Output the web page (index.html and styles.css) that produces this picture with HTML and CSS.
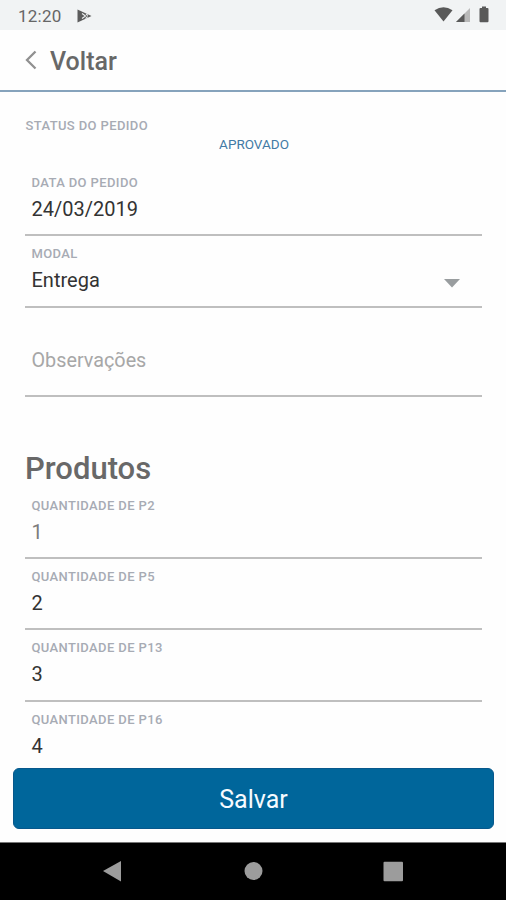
FILE: index.html
```html
<!DOCTYPE html>
<html lang="pt-BR">
<head>
<meta charset="utf-8">
<title>Pedido</title>
<link rel="stylesheet" href="styles.css">
</head>
<body>
<div class="screen">
  <div class="statusbar">
    <span class="clock">12:20</span>
    <svg class="play" width="16" height="14" viewBox="0 0 16 14"><path d="M0.5 0.5L14.5 7L0.5 13.5Z" fill="#5c5c5c"/><path d="M5 4.5L8.5 7L5 9.5M9 4.8L10.8 6.5M8.6 9.6L10.6 7.6" fill="none" stroke="#f1f3f4" stroke-width="1.1"/></svg>
    <svg class="system" width="56" height="18" viewBox="0 0 56 18"><path d="M0.5 4.2Q9.5 -1.8 18.5 4.2L9.5 15.5Z" fill="#595959"/><path d="M22 16L36 2V16Z" fill="#b9b9b9"/><path d="M22 16L30.5 7.5V16Z" fill="#595959"/><path d="M48 0.5H52V2H53.5Q54.5 2 54.5 3V15.2Q54.5 16.2 53.5 16.2H46.5Q45.5 16.2 45.5 15.2V3Q45.5 2 46.5 2H48Z" fill="#595959"/></svg>
  </div>
  <header class="header">
    <svg width="12" height="20" viewBox="0 0 12 20"><path d="M10.5 1.5L2 10L10.5 18.5" fill="none" stroke="#909090" stroke-width="2.3"/></svg>
    <span class="back">Voltar</span>
  </header>
  <main class="content">
    <div class="label status-label">STATUS DO PEDIDO</div>
    <div class="status">APROVADO</div>
    <div class="field date"><div class="label">DATA DO PEDIDO</div><div class="value">24/03/2019</div></div>
    <div class="field select"><div class="label">MODAL</div><div class="value">Entrega<svg width="16" height="9" viewBox="0 0 16 9"><path d="M0 0H16L8 8.5Z" fill="#999d9f"/></svg></div></div>
    <div class="field notes"><div class="value placeholder">Observações</div></div>
    <h1 class="title">Produtos</h1>
    <div class="field"><div class="label">QUANTIDADE DE P2</div><div class="value muted">1</div></div>
    <div class="field"><div class="label">QUANTIDADE DE P5</div><div class="value">2</div></div>
    <div class="field tall"><div class="label">QUANTIDADE DE P13</div><div class="value">3</div></div>
    <div class="field"><div class="label">QUANTIDADE DE P16</div><div class="value">4</div></div>
  </main>
  <footer class="footer"><button class="save">Salvar</button></footer>
  <nav class="navbar">
    <svg width="506" height="57" viewBox="0 0 506 57"><path d="M103 28L121 18V38.5Z" fill="#9c9c9c"/><circle cx="253.5" cy="28" r="9" fill="#9c9c9c"/><rect x="383.5" y="18.7" width="19.5" height="19.5" rx="1" fill="#9c9c9c"/></svg>
  </nav>
</div>
</body>
</html>
```
FILE: styles.css
```css
* { box-sizing: border-box; }
body { margin: 0; background: #fefefe; font-family: Roboto, "Liberation Sans", sans-serif; }
.screen { width: 506px; height: 900px; display: flex; flex-direction: column; overflow: hidden; }
.statusbar { height: 30px; flex: none; display: flex; align-items: center; padding: 0 16px 0 18px; background: #f1f3f4; }
.clock { font-size: 17px; line-height: 20px; letter-spacing: 0.25px; color: #666; padding-top: 1px; }
.play { margin: 1px 0 0 15px; }
.system { margin-left: auto; }
.header { height: 62px; flex: none; display: flex; align-items: center; padding: 0 0 0 25px; gap: 13px; border-bottom: 2px solid #86a3bc; }
.back { font-size: 25px; line-height: 30px; font-weight: 500; color: #686868; padding-top: 3px; }
.content { flex: 1; min-height: 0; overflow: hidden; padding: 26px 24px 0 25px; }
.label { font-size: 13px; line-height: 16px; font-weight: 500; letter-spacing: 0.38px; color: #a7abb4; }
.status-label { padding-left: 0.5px; }
.status { margin-top: 2px; text-align: center; font-size: 13.5px; line-height: 16px; color: #427aa5; padding-left: 1px; }
.field { height: 71px; padding: 10px 0 0 6.5px; border-bottom: 2px solid #bfbfbf; }
.date { height: 84px; padding-top: 23px; }
.select, .tall { height: 72px; }
.value { margin-top: 6px; display: flex; justify-content: space-between; font-size: 20px; line-height: 24px; color: #333; }
.value svg { margin: 11px 22px 0 0; }
.notes { height: 89px; padding-top: 35px; }
.placeholder { color: #a7a7a7; font-size: 19.8px; }
.muted { color: #7c7c7c; }
.title { margin: 53px 0 0; font-size: 31px; line-height: 38px; font-weight: 500; color: #686868; }
.footer { height: 74px; flex: none; padding: 0 12px 13px 13px; }
.save { display: block; width: 100%; height: 61px; padding: 2px 0 0; border: 1px solid #07588c; border-radius: 6px; background: #00669b; color: #f6fbff; font: 400 25px/30px Roboto, sans-serif; }
.navbar { height: 58px; flex: none; border-top: 1px solid #777; background: #000; }
.navbar svg { display: block; }
```
